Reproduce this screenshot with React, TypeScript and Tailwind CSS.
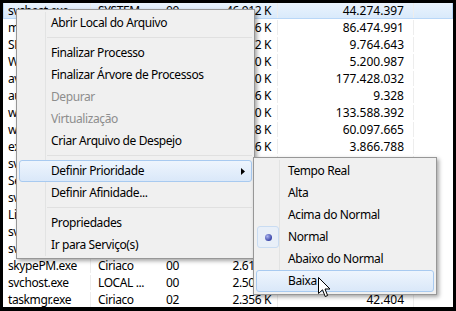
import React from "react";

// process list rows behind the context menu
const rows = [
  ["svchost.exe", "SYSTEM", "00", "46.912 K", "44.274.397"],
  ["msseces.exe", "Ciriaco", "00", "12.536 K", "86.474.991"],
  ["SLsvc.exe", "NETWORK...", "00", "7.312 K", "9.764.643"],
  ["WmiPrvSE.exe", "SYSTEM", "00", "6.040 K", "5.200.987"],
  ["avp.exe", "SYSTEM", "00", "5.880 K", "177.428.032"],
  ["audiodg.exe", "LOCAL ...", "00", "5.216 K", "9.328"],
  ["wmpnetwk.exe", "NETWORK...", "00", "4.920 K", "133.588.392"],
  ["winlogon.exe", "SYSTEM", "00", "4.408 K", "60.097.665"],
  ["explorer.exe", "Ciriaco", "00", "4.136 K", "3.866.788"],
  ["svchost.exe", "LOCAL ...", "00", "3.912 K", "2.845.110"],
  ["SearchIndexer.exe", "SYSTEM", "00", "3.704 K", "1.907.432"],
  ["svchost.exe", "SYSTEM", "00", "3.480 K", "1.338.210"],
  ["LiveComm.exe", "Ciriaco", "00", "3.152 K", "905.664"],
  ["svchost.exe", "NETWORK...", "00", "2.960 K", "712.580"],
  ["svchost.exe", "LOCAL ...", "00", "2.804 K", "533.917"],
  ["skypePM.exe", "Ciriaco", "00", "2.612 K", "248.006"],
  ["svchost.exe", "LOCAL ...", "00", "2.508 K", "96.311"],
  ["taskmgr.exe", "Ciriaco", "02", "2.356 K", "42.404"],
];

const hl =
  "rounded-[3px] border border-[#a8caf0] bg-gradient-to-b from-[#eef5fd] to-[#dae8f9]";

const MenuItem = ({ label, disabled, active, arrow }: any) => (
  <div
    className={`relative flex h-[22px] items-center pl-[31px] ${active ? hl : "border border-transparent"} ${disabled ? "text-[#8d8d8d]" : "text-black"}`}
  >
    {label}
    {arrow && (
      <svg className="absolute right-[6px] top-[7px]" width="4" height="7" viewBox="0 0 4 7">
        <path d="M0 0 L4 3.5 L0 7 Z" fill="#000" />
      </svg>
    )}
  </div>
);

const Sep = () => (
  <div className="flex h-[8px] items-center pl-[28px]">
    <div className="h-[2px] w-full border-t border-[#e0e0e0] border-b-white" />
  </div>
);

export default function App() {
  return (
    <div className="h-[311px] w-[456px] bg-black pb-[4px] pl-[3px] pr-[3px] pt-[3px] font-['Noto_Sans',sans-serif] text-[12px] tracking-[-0.4px] text-black">
      <div className="relative h-full w-full overflow-hidden bg-white">
        <div className="-mt-[1.5px]">
          {rows.map((r, i) => (
            <div
              key={i}
              className={`flex h-[17px] items-center ${i === 0 ? "border border-[#b9d7f7] bg-gradient-to-b from-[#eaf3fd] to-[#d9eafb]" : "border border-transparent"}`}
            >
              <div className="h-full w-[87px] truncate border-r border-[#ededed] pl-[4px] leading-[16px]">{r[0]}</div>
              <div className="h-full w-[66px] truncate pl-[7px] leading-[16px]">{r[1]}</div>
              <div className="h-full w-[31px] pl-[9px] leading-[16px]">{r[2]}</div>
              <div className="h-full w-[90px] border-r border-[#ededed] pr-[6px] text-right leading-[16px]">{r[3]}</div>
              <div className="h-full w-[136px] border-r border-[#ededed] pr-[9px] text-right leading-[16px] tracking-[0px]">{r[4]}</div>
            </div>
          ))}
        </div>

        {/* context menu */}
        <div className="absolute left-[13px] top-[6px] w-[239px] border border-[#979797] bg-[#f0f0f0] p-[2px] shadow-[2px_2px_4px_rgba(0,0,0,0.35)]">
          <div className="absolute bottom-[2px] left-[28px] top-[2px] w-[2px] border-l border-[#e2e3e3] border-r-white" />
          <MenuItem label="Abrir Local do Arquivo" />
          <Sep />
          <MenuItem label="Finalizar Processo" />
          <MenuItem label="Finalizar Árvore de Processos" />
          <MenuItem label="Depurar" disabled />
          <MenuItem label="Virtualização" disabled />
          <MenuItem label="Criar Arquivo de Despejo" />
          <Sep />
          <MenuItem label="Definir Prioridade" active arrow />
          <MenuItem label="Definir Afinidade..." />
          <Sep />
          <MenuItem label="Propriedades" />
          <MenuItem label="Ir para Serviço(s)" />
        </div>

        {/* priority submenu */}
        <div className="absolute left-[250px] top-[154px] w-[184px] border border-[#979797] bg-[#f0f0f0] p-[2px] shadow-[2px_2px_4px_rgba(0,0,0,0.35)]">
          <div className="absolute bottom-[2px] left-[25px] top-[2px] w-[2px] border-l border-[#e2e3e3] border-r-white" />
          <MenuItem label="Tempo Real" />
          <MenuItem label="Alta" />
          <MenuItem label="Acima do Normal" />
          <div className="relative flex h-[22px] items-center border border-transparent pl-[31px]">
            <div className="absolute left-[0px] top-[-1px] flex h-[22px] w-[22px] items-center justify-center rounded-[3px] border border-[#c9dcf2] bg-[#e8eff8]">
              <div className="h-[7px] w-[7px] rounded-full bg-[radial-gradient(circle_at_35%_35%,#aab4f0,#3a45a8_70%)]" />
            </div>
            Normal
          </div>
          <MenuItem label="Abaixo do Normal" />
          <MenuItem label="Baixa" active />
        </div>

        {/* mouse pointer */}
        <svg className="absolute left-[315px] top-[274px]" width="13" height="21" viewBox="0 0 13 21">
          <path d="M0.5 0.5 L0.5 16.5 L4.5 12.8 L7.2 19.5 L9.6 18.5 L7 12 L12 12 Z" fill="#fff" stroke="#000" strokeWidth="1" strokeLinejoin="round" />
        </svg>
      </div>
    </div>
  );
}
